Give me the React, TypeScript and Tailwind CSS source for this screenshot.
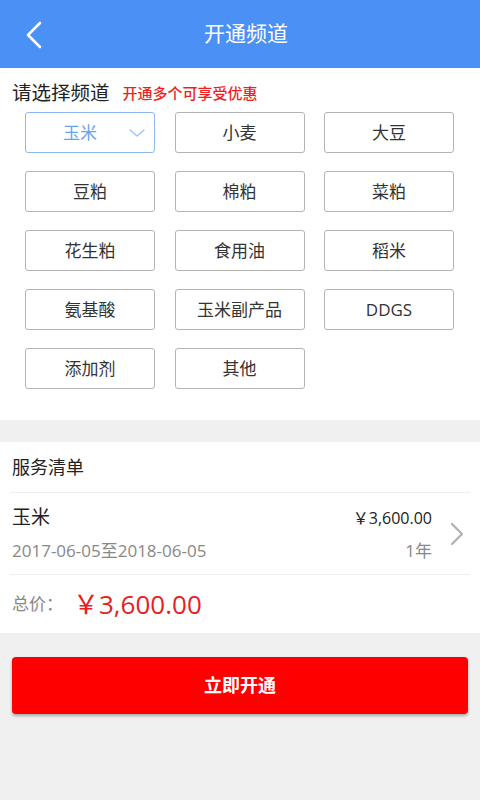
import React from "react";

const items = [
  "玉米", "小麦", "大豆",
  "豆粕", "棉粕", "菜粕",
  "花生粕", "食用油", "稻米",
  "氨基酸", "玉米副产品", "DDGS",
  "添加剂", "其他",
];

export default function App() {
  return (
    <div
      className="w-[480px] min-h-[800px] bg-[#f0f0f0] flex flex-col"
      style={{ fontFamily: '"Open Sans", "Noto Sans CJK SC", sans-serif' }}
    >
      <div className="h-[68px] bg-[#4a90f5] flex items-center relative">
        <svg className="absolute left-[24px] top-[21px]" width="20" height="28" viewBox="0 0 20 28">
          <path d="M16 2 L4 14 L16 26" fill="none" stroke="#ffffff" strokeWidth="2.6" strokeLinecap="round" strokeLinejoin="round" />
        </svg>
        <div className="flex-1 text-center text-white text-[21px] pl-[12px]">开通频道</div>
      </div>

      <div className="bg-white pt-[12px] pb-[31px]">
        <div className="flex items-center h-[26px] pl-[12px]">
          <span className="text-[19.5px] text-[#222] leading-none">请选择频道</span>
          <span className="text-[15px] font-medium text-[#f01e1e] ml-[13px] leading-none">开通多个可享受优惠</span>
        </div>
        <div className="grid grid-cols-[130px_130px_130px] gap-x-[19.5px] gap-y-[18px] pl-[25px] mt-[6px]">
          {items.map((t, i) =>
            i === 0 ? (
              <div
                key={t}
                className="h-[41px] rounded-[3px] border-[1.5px] border-[#8db8f2] flex items-center justify-center relative text-[17px] text-[#6aa2ee] pr-[20px]"
              >
                {t}
                <svg className="absolute right-[9px] top-[15px]" width="16" height="10" viewBox="0 0 16 10">
                  <path d="M1 2 L8 8 L15 2" fill="none" stroke="#9cc2f2" strokeWidth="1.3" strokeLinecap="round" strokeLinejoin="round" />
                </svg>
              </div>
            ) : (
              <div
                key={t}
                className="h-[41px] rounded-[3px] border-[1.5px] border-[#b4b4b4] flex items-center justify-center text-[17px] text-[#333]"
              >
                {t}
              </div>
            )
          )}
        </div>
      </div>

      <div className="h-[22px]" />

      <div className="bg-white">
        <div className="h-[50px] flex items-center pl-[12px] text-[18px] text-[#222]">服务清单</div>
        <div className="mx-[10px] h-px bg-[#eeeeee]" />
        <div className="h-[81px] flex items-center pl-[12px] pr-[16px]">
          <div className="flex-1 flex flex-col gap-[15px]">
            <div className="flex justify-between items-center">
              <span className="text-[19px] text-[#222] leading-none">玉米</span>
              <span className="text-[16px] text-[#222] leading-none">￥3,600.00</span>
            </div>
            <div className="flex justify-between items-center">
              <span className="text-[17px] text-[#888] leading-none">2017-06-05至2018-06-05</span>
              <span className="text-[17px] text-[#888] leading-none">1年</span>
            </div>
          </div>
          <svg className="ml-[18px]" width="14" height="24" viewBox="0 0 14 24">
            <path d="M2 2 L12 12 L2 22" fill="none" stroke="#b0b0b0" strokeWidth="2.2" strokeLinecap="round" strokeLinejoin="round" />
          </svg>
        </div>
        <div className="mx-[10px] h-px bg-[#eeeeee]" />
        <div className="h-[58px] flex items-center pl-[12px]">
          <span className="text-[17px] text-[#888]">总价：</span>
          <span className="text-[26px] text-[#e8201e] ml-[10px]">￥3,600.00</span>
        </div>
      </div>

      <div className="px-[12px] pt-[24px]">
        <div className="h-[57px] bg-[#ff0000] rounded-[4px] shadow-[0_2px_3px_rgba(0,0,0,0.3)] flex items-center justify-center text-white text-[18px] font-bold">
          立即开通
        </div>
      </div>
    </div>
  );
}
